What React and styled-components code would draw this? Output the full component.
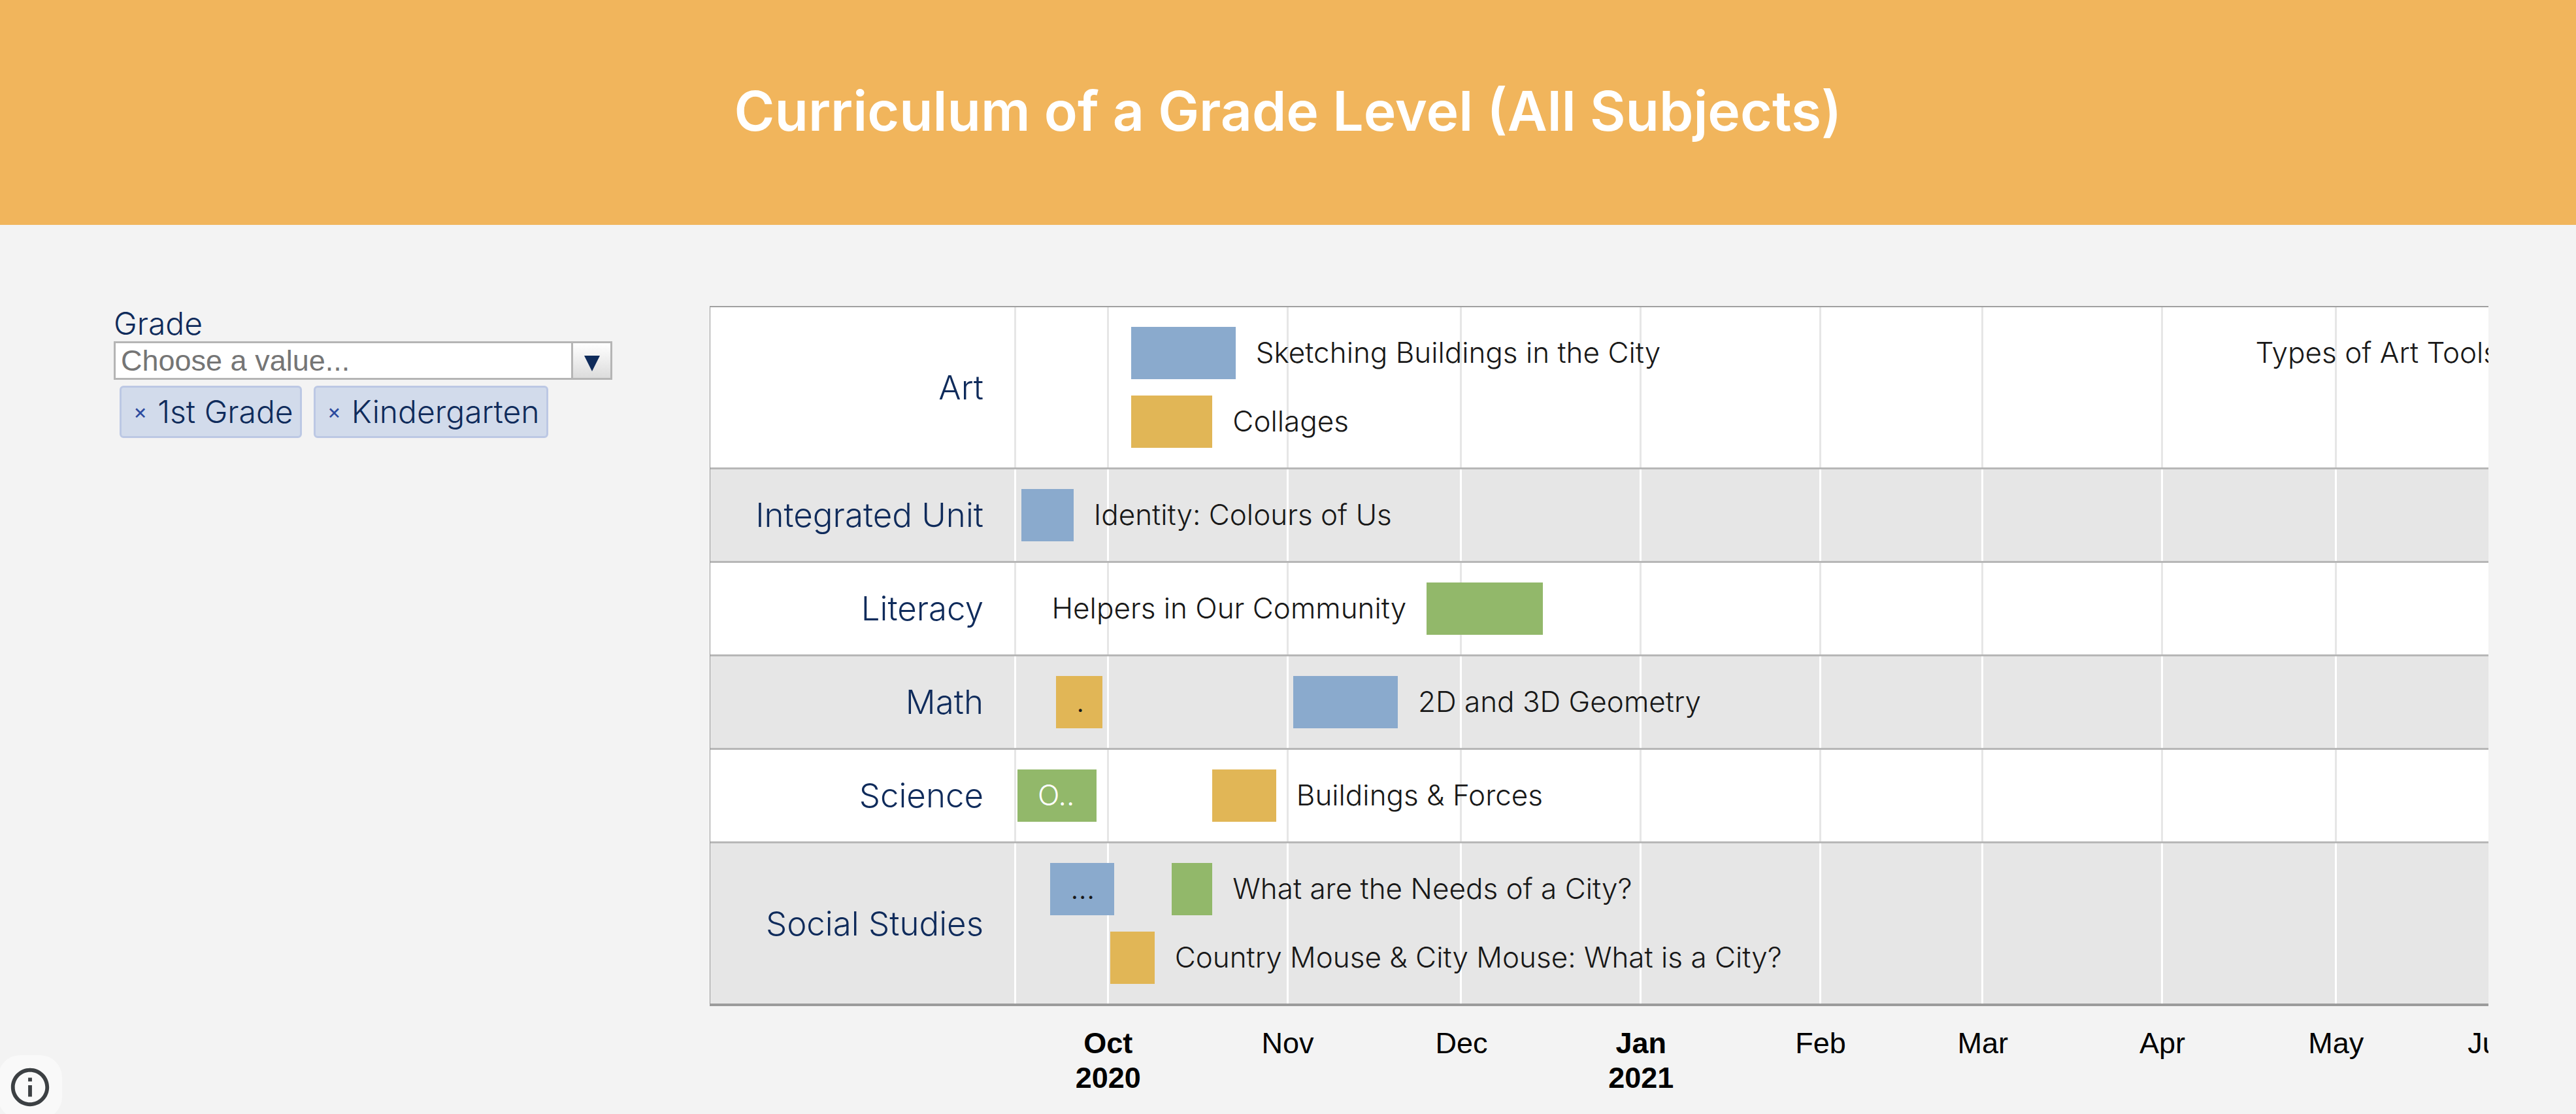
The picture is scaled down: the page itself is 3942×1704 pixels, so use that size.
import React, { useState } from "react";
import styled, { createGlobalStyle } from "styled-components";

const GlobalStyle = createGlobalStyle`
  *, *::before, *::after { box-sizing: border-box; }
  body { margin: 0; background: #f3f3f3; }
`;

const sans = `Inter, "Open Sans", sans-serif`;
const arial = `"Liberation Sans", Arial, sans-serif`;

const Page = styled.div`
  min-height: 100vh;
  font-family: ${sans};
  color: #0f2b5b;
`;

const Header = styled.header`
  display: flex;
  align-items: center;
  justify-content: center;
  height: 344px;
  padding-bottom: 4px;
  background: #f1b55c;
`;

const Title = styled.h1`
  margin: 0;
  font-size: 84px;
  font-weight: 600;
  line-height: 100px;
  color: #fff;
`;

const Main = styled.main`
  display: grid;
  grid-template-columns: minmax(0, 763fr) minmax(0, 2722fr);
  column-gap: 149px;
  align-items: start;
  padding: 124px 134px 20px 174px;
`;

const Filter = styled.section`
  display: flex;
  flex-direction: column;
`;

const FilterLabel = styled.label`
  font-size: 48px;
  font-weight: 350;
  line-height: 54px;
`;

const Combo = styled.div`
  display: flex;
  height: 59px;
  border: 3px solid #b5b5b5;
  background: #fff;
`;

const ComboInput = styled.input`
  flex: 1;
  min-width: 0;
  padding: 0 8px;
  border: 0;
  outline: 0;
  background: transparent;
  font-family: ${arial};
  font-size: 45px;
  color: #333;
  &::placeholder { color: #757575; opacity: 1; }
`;

const ComboButton = styled.button`
  display: flex;
  align-items: center;
  justify-content: center;
  width: 60px;
  padding: 8px 0 0;
  border: 0;
  border-left: 3px solid #b5b5b5;
  background: linear-gradient(#ffffff, #dcdcdc);
`;

const Chips = styled.ul`
  display: flex;
  flex-wrap: wrap;
  gap: 18px;
  margin: 9px 0 0;
  padding: 0 0 0 9px;
  list-style: none;
`;

const Chip = styled.li`
  display: flex;
  align-items: center;
  height: 80px;
  padding: 0 10px 0 18px;
  gap: 16px;
  border: 3px solid #bcc8e4;
  border-radius: 6px;
  background: #d2dbeb;
  font-size: 48px;
  font-weight: 350;
  line-height: 54px;
`;

const ChipRemove = styled.button`
  padding: 0;
  border: 0;
  background: none;
  font-family: ${sans};
  font-size: 32px;
  line-height: 54px;
  color: #2c4a9e;
`;

const Chart = styled.section`
  overflow: hidden;
`;

const Rows = styled.div`
  border-top: 2px solid #a0a0a0;
  border-left: 1px solid #999;
  border-bottom: 4px solid #9b9b9b;
`;

const Row = styled.div`
  --line: #e6e6e6;
  display: grid;
  grid-template-columns: 467px minmax(0, 1fr);
  background: #fff;
  border-bottom: 3px solid #b7b7b7;
  &:nth-child(even) { background: #e6e6e6; --line: #fff; }
  &:last-child { border-bottom: 0; }
`;

const RowName = styled.h2`
  align-self: center;
  margin: 0;
  padding-right: 49px;
  text-align: right;
  white-space: nowrap;
  font-size: 51px;
  font-weight: 350;
  line-height: 60px;
`;

const Track = styled.div`
  position: relative;
  display: flex;
  flex-direction: column;
  gap: 25px;
  padding: 30px 0;
`;

const GridLine = styled.span`
  position: absolute;
  top: 0;
  bottom: 0;
  width: 3px;
  margin-left: -2px;
  background: var(--line);
`;

const Lane = styled.div`
  position: relative;
  height: 80px;
`;

const Bar = styled.div`
  position: absolute;
  top: 0;
  height: 100%;
  background: ${(p) => p.$fill};
`;

const BarLabel = styled.span`
  position: absolute;
  top: 0;
  ${(p) => (p.$side === "left" ? "right: 100%;" : p.$side === "inside" ? "left: 0;" : "left: 100%;")}
  padding: 0 31px;
  white-space: nowrap;
  font-size: 44px;
  font-weight: 300;
  line-height: 78px;
  color: ${(p) => (p.$light ? "#fff" : "#181818")};
`;

const Axis = styled.div`
  position: relative;
  height: 143px;
  margin-left: 468px;
`;

const Tick = styled.div`
  position: absolute;
  top: 30px;
  width: 120px;
  margin-left: -60px;
  text-align: center;
  font-family: ${arial};
  font-size: 45px;
  font-weight: ${(p) => (p.$strong ? 700 : 400)};
  line-height: 53px;
  color: #000;
`;

const InfoButton = styled.button`
  position: fixed;
  left: -3px;
  bottom: -8px;
  display: flex;
  align-items: center;
  justify-content: center;
  width: 98px;
  height: 98px;
  padding: 0;
  border: 0;
  border-radius: 34px;
  background: #f9f9f9;
`;

const BLUE = "#8aaacd";
const YELLOW = "#e1b656";
const GREEN = "#92b86a";

// Days are counted from 15 September 2020.
const VISIBLE_DAYS = 254.3;
const at = (day) => `${(day / VISIBLE_DAYS) * 100}%`;

const gridDays = [0, 16, 47, 77, 108, 139, 167, 198, 228];

const ticks = [
  { day: 16, month: "Oct", year: "2020" },
  { day: 47, month: "Nov" },
  { day: 77, month: "Dec" },
  { day: 108, month: "Jan", year: "2021" },
  { day: 139, month: "Feb" },
  { day: 167, month: "Mar" },
  { day: 198, month: "Apr" },
  { day: 228, month: "May" },
  { day: 254.8, month: "Jun" },
];

const subjects = [
  {
    name: "Art",
    lanes: [
      [
        { from: 20, to: 38, fill: BLUE, text: "Sketching Buildings in the City" },
        { from: 259.5, to: 280, fill: BLUE, text: "Types of Art Tools", side: "left" },
      ],
      [{ from: 20, to: 34, fill: YELLOW, text: "Collages" }],
    ],
  },
  { name: "Integrated Unit", lanes: [[{ from: 1, to: 10, fill: BLUE, text: "Identity: Colours of Us" }]] },
  {
    name: "Literacy",
    lanes: [[{ from: 71, to: 91, fill: GREEN, text: "Helpers in Our Community", side: "left" }]],
  },
  {
    name: "Math",
    lanes: [
      [
        { from: 7, to: 15, fill: YELLOW, text: ".", side: "inside" },
        { from: 48, to: 66, fill: BLUE, text: "2D and 3D Geometry" },
      ],
    ],
  },
  {
    name: "Science",
    lanes: [
      [
        { from: 0.35, to: 14, fill: GREEN, text: "O..", side: "inside", light: true },
        { from: 34, to: 45, fill: YELLOW, text: "Buildings & Forces" },
      ],
    ],
  },
  {
    name: "Social Studies",
    lanes: [
      [
        { from: 6, to: 17, fill: BLUE, text: "...", side: "inside" },
        { from: 27, to: 34, fill: GREEN, text: "What are the Needs of a City?" },
      ],
      [{ from: 16.35, to: 24, fill: YELLOW, text: "Country Mouse & City Mouse: What is a City?" }],
    ],
  },
];

function GradeFilter() {
  const [grades, setGrades] = useState(["1st Grade", "Kindergarten"]);
  return (
    <Filter>
      <FilterLabel htmlFor="grade">Grade</FilterLabel>
      <Combo>
        <ComboInput id="grade" type="text" placeholder="Choose a value..." />
        <ComboButton type="button" aria-label="Show grades">
          <svg width="24" height="24" viewBox="0 0 24 24" aria-hidden="true">
            <path d="M0 0H24L12 24Z" fill="#0f2b5b" />
          </svg>
        </ComboButton>
      </Combo>
      <Chips>
        {grades.map((grade) => (
          <Chip key={grade}>
            <ChipRemove
              type="button"
              aria-label={`Remove ${grade}`}
              onClick={() => setGrades(grades.filter((g) => g !== grade))}
            >
              ×
            </ChipRemove>
            {grade}
          </Chip>
        ))}
      </Chips>
    </Filter>
  );
}

function SubjectRow({ name, lanes }) {
  return (
    <Row>
      <RowName>{name}</RowName>
      <Track>
        {gridDays.map((day) => (
          <GridLine key={day} style={{ left: at(day) }} />
        ))}
        {lanes.map((units, i) => (
          <Lane key={i}>
            {units.map((u) => (
              <Bar key={u.text} $fill={u.fill} style={{ left: at(u.from), width: at(u.to - u.from) }}>
                <BarLabel $side={u.side} $light={u.light}>{u.text}</BarLabel>
              </Bar>
            ))}
          </Lane>
        ))}
      </Track>
    </Row>
  );
}

export default function App() {
  return (
    <Page>
      <GlobalStyle />
      <Header>
        <Title>Curriculum of a Grade Level (All Subjects)</Title>
      </Header>
      <Main>
        <GradeFilter />
        <Chart aria-label="Units by subject">
          <Rows>
            {subjects.map((s) => (
              <SubjectRow key={s.name} {...s} />
            ))}
          </Rows>
          <Axis>
            {ticks.map((t) => (
              <Tick key={t.month} $strong={Boolean(t.year)} style={{ left: at(t.day) }}>
                {t.month}
                {t.year && <div>{t.year}</div>}
              </Tick>
            ))}
          </Axis>
        </Chart>
      </Main>
      <InfoButton type="button" aria-label="Information">
        <svg width="70" height="70" viewBox="0 0 24 24" fill="#3c4043" aria-hidden="true">
          <path d="M11 7h2v2h-2zm0 4h2v6h-2zm1-9C6.48 2 2 6.48 2 12s4.48 10 10 10 10-4.48 10-10S17.52 2 12 2zm0 18c-4.41 0-8-3.59-8-8s3.59-8 8-8 8 3.59 8 8-3.59 8-8 8z" />
        </svg>
      </InfoButton>
    </Page>
  );
}
